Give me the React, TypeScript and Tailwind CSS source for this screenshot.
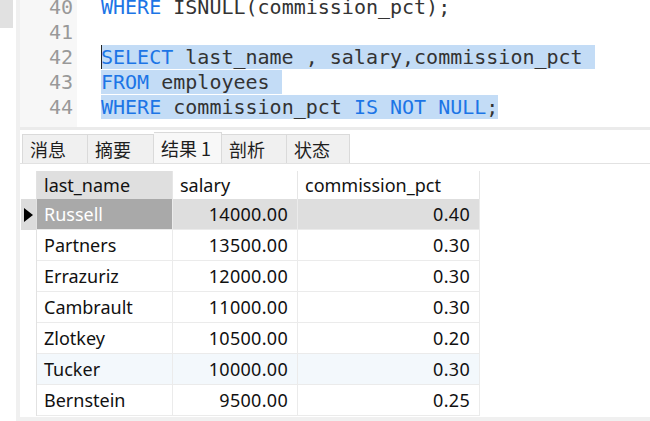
import React from "react";

type Row = { name: string; salary: string; pct: string };

const rows: Row[] = [
  { name: "Russell", salary: "14000.00", pct: "0.40" },
  { name: "Partners", salary: "13500.00", pct: "0.30" },
  { name: "Errazuriz", salary: "12000.00", pct: "0.30" },
  { name: "Cambrault", salary: "11000.00", pct: "0.30" },
  { name: "Zlotkey", salary: "10500.00", pct: "0.20" },
  { name: "Tucker", salary: "10000.00", pct: "0.30" },
  { name: "Bernstein", salary: "9500.00", pct: "0.25" },
];

const tabs = [
  { label: "消息", w: "w-[66px]" },
  { label: "摘要", w: "w-[66px]" },
  { label: "结果 1", w: "w-[68px]", active: true },
  { label: "剖析", w: "w-[65px]" },
  { label: "状态", w: "w-[63px]" },
];

const Kw = ({ children }: { children: React.ReactNode }) => <span className="text-[#1c75e6]">{children}</span>;

export default function App() {
  return (
    <div className="flex h-[421px] w-[650px] overflow-hidden bg-white">
      {/* left edge */}
      <div className="w-[16px] shrink-0">
        <div className="h-[28px] w-[13px] bg-[#e1e1e1]" />
      </div>

      <div className="flex min-w-0 flex-1 flex-col border-l-4 border-[#f0f0f0]">
        {/* editor */}
        <div className="flex h-[127px] shrink-0 overflow-hidden font-['DejaVu_Sans_Mono',monospace] text-[20px] leading-[25px]">
          <div className="-mt-[5px] w-[57px] shrink-0 bg-[#f7f7f7] pr-[4px] pb-[5px] text-right text-[#999999]">
            {[40, 41, 42, 43, 44].map((n) => (
              <div key={n} className="h-[25px]">{n}</div>
            ))}
          </div>
          <div className="-mt-[5px] pl-[24px] whitespace-pre text-[#333333]">
            <div className="h-[25px]">
              <Kw>WHERE</Kw> ISNULL(commission_pct);
            </div>
            <div className="h-[25px]" />
            <div className="h-[25px]">
              <span className="bg-[#c3dcf6] shadow-[inset_1px_0_0_#222]">
                <Kw>SELECT</Kw> last_name , salary,commission_pct{" "}
              </span>
            </div>
            <div className="h-[25px]">
              <span className="bg-[#c3dcf6]">
                <Kw>FROM</Kw> employees{" "}
              </span>
            </div>
            <div className="h-[25px]">
              <span className="bg-[#c3dcf6]">
                <Kw>WHERE</Kw> commission_pct <Kw>IS</Kw> <Kw>NOT</Kw> <Kw>NULL</Kw>;
              </span>
            </div>
          </div>
        </div>

        <div className="h-[3px] shrink-0 bg-[#ebebeb]" />

        {/* tabs */}
        <div className="flex h-[34px] shrink-0 items-end border-b border-[#e2e2e2] pl-[2px] font-['Noto_Sans_CJK_SC',sans-serif] text-[18px] text-[#1e1e1e]">
          {tabs.map((t, i) => (
            <div
              key={t.label}
              className={`${t.w} flex items-center border-t border-r border-[#dadada] pl-[7px] ${i === 0 ? "border-l" : ""} ${
                t.active ? "h-[31px] bg-[#f8f8f8]" : "h-[29px] bg-[#f0f0f0]"
              }`}
            >
              {t.label}
            </div>
          ))}
        </div>

        {/* result grid */}
        <div className="mt-[7px] pl-[1px] font-['Noto_Sans','Noto_Sans_CJK_SC',sans-serif] text-[18px] text-[#111111]">
          <div className="flex h-[28px]">
            <div className="w-[16px] border-r border-[#e2e2e2]" />
            <div className="flex w-[136px] items-center border-r border-[#e6e6e6] bg-[#dfdfdf] pl-[7px]">last_name</div>
            <div className="flex w-[125px] items-center border-r border-[#e6e6e6] pl-[7px]">salary</div>
            <div className="flex w-[182px] items-center border-r border-[#e6e6e6] pl-[7px]">commission_pct</div>
          </div>
          {rows.map((r, i) => {
            const first = i === 0;
            const alt = r.name === "Tucker";
            const cellBg = first ? "bg-[#dedede]" : alt ? "bg-[#f3f8fc]" : "bg-white";
            return (
              <div key={r.name} className="flex h-[31px]">
                <div
                  className={`flex w-[16px] items-center justify-center border-r border-[#e2e2e2] ${first ? "bg-[#dcdcdc]" : ""}`}
                >
                  {first && (
                    <svg width="9" height="14" viewBox="0 0 9 14">
                      <path d="M0 0 L9 7 L0 14 Z" fill="#000" />
                    </svg>
                  )}
                </div>
                <div
                  className={`flex w-[136px] items-center border-r border-b border-[#ebebeb] pl-[7px] ${
                    first ? "bg-[#a9a9a9] text-white" : cellBg
                  }`}
                >
                  {r.name}
                </div>
                <div className={`flex w-[125px] items-center justify-end border-r border-b border-[#ebebeb] pr-[9px] tracking-[0.3px] ${cellBg}`}>
                  {r.salary}
                </div>
                <div className={`flex w-[182px] items-center justify-end border-r border-b border-[#ebebeb] pr-[9px] tracking-[0.3px] ${cellBg}`}>
                  {r.pct}
                </div>
              </div>
            );
          })}
        </div>

        <div className="mt-auto h-[4px] shrink-0 bg-[#f0f0f0]" />
      </div>
    </div>
  );
}
